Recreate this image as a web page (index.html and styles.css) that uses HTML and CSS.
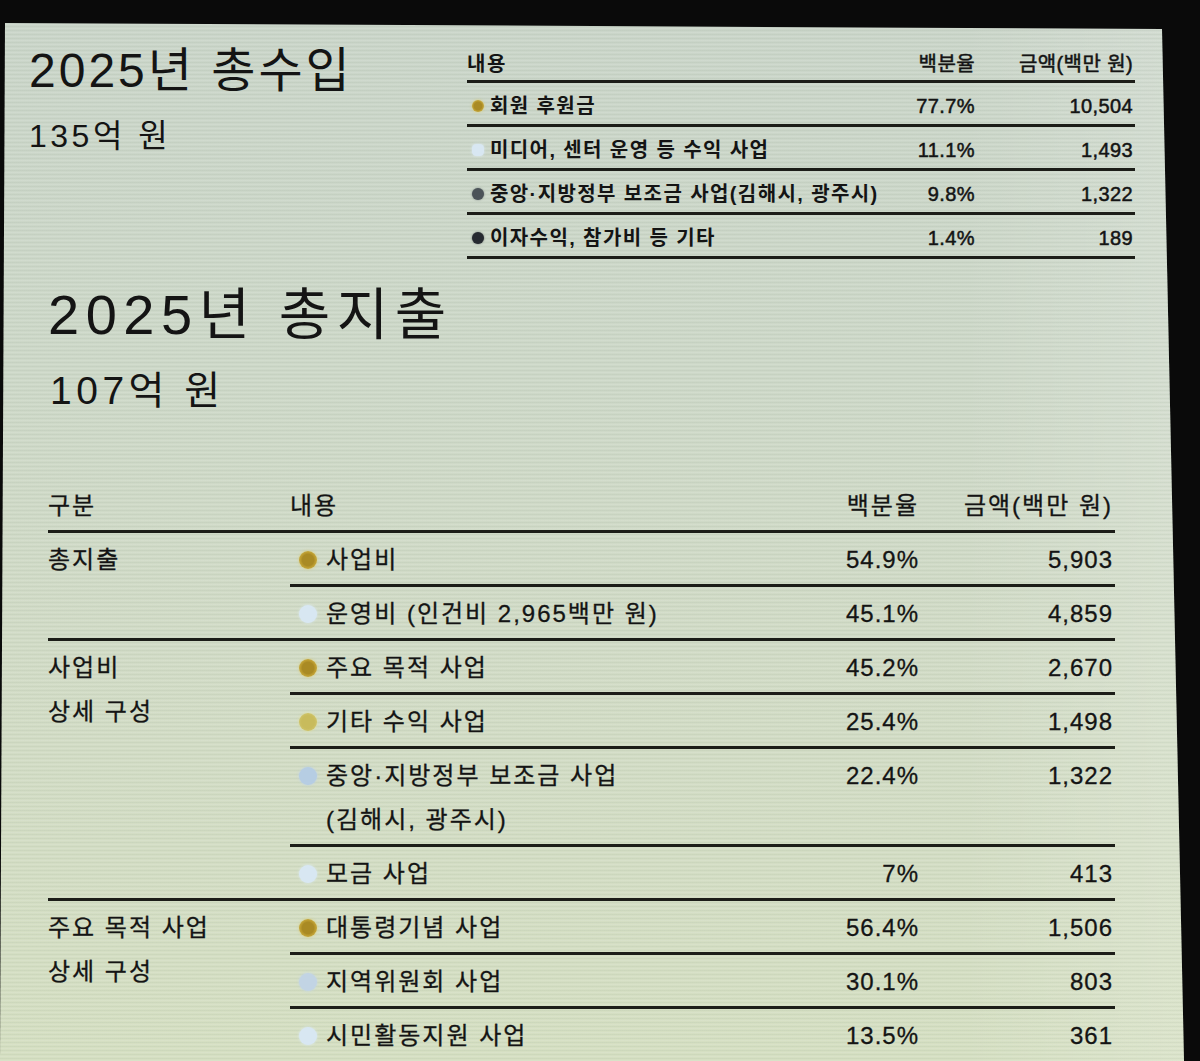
FILE: index.html
```html
<!DOCTYPE html>
<html lang="ko">
<head>
<meta charset="utf-8">
<title>2025년 총수입 · 총지출</title>
<link rel="stylesheet" href="styles.css">
</head>
<body>
<div class="screen">
  <section class="income">
    <div class="income-head">
      <h1 class="title-sm">2025년 총수입</h1>
      <p class="sum-sm">135억 원</p>
    </div>
    <table class="inc-table">
      <colgroup><col class="ic1"><col class="ic2"><col class="ic3"></colgroup>
      <thead>
        <tr><th class="l">내용</th><th class="r">백분율</th><th class="r">금액(백만 원)</th></tr>
      </thead>
      <tbody>
        <tr><td><div class="item"><span class="dot gold"></span><span class="txt">회원 후원금</span></div></td><td class="r">77.7%</td><td class="r">10,504</td></tr>
        <tr><td><div class="item"><span class="dot pale sq"></span><span class="txt">미디어, 센터 운영 등 수익 사업</span></div></td><td class="r">11.1%</td><td class="r">1,493</td></tr>
        <tr><td><div class="item"><span class="dot slate"></span><span class="txt">중앙·지방정부 보조금 사업(김해시, 광주시)</span></div></td><td class="r">9.8%</td><td class="r">1,322</td></tr>
        <tr><td><div class="item"><span class="dot ink"></span><span class="txt">이자수익, 참가비 등 기타</span></div></td><td class="r">1.4%</td><td class="r">189</td></tr>
      </tbody>
    </table>
  </section>

  <section class="expense">
    <h1 class="title-lg">2025년 총지출</h1>
    <p class="sum-lg">107억 원</p>
    <table class="exp-table">
      <colgroup><col class="ec1"><col class="ec2"><col class="ec3"><col class="ec4"></colgroup>
      <thead>
        <tr><th class="l">구분</th><th class="l">내용</th><th class="r">백분율</th><th class="r">금액(백만 원)</th></tr>
      </thead>
      <tbody>
        <tr class="grp">
          <td class="label" rowspan="2">총지출</td>
          <td><div class="item"><span class="dot gold"></span><span class="txt">사업비</span></div></td><td class="r">54.9%</td><td class="r">5,903</td>
        </tr>
        <tr>
          <td><div class="item"><span class="dot pale"></span><span class="txt">운영비 (인건비 2,965백만 원)</span></div></td><td class="r">45.1%</td><td class="r">4,859</td>
        </tr>
        <tr class="grp">
          <td class="label" rowspan="4">사업비<br>상세 구성</td>
          <td><div class="item"><span class="dot gold"></span><span class="txt">주요 목적 사업</span></div></td><td class="r">45.2%</td><td class="r">2,670</td>
        </tr>
        <tr>
          <td><div class="item"><span class="dot lgold"></span><span class="txt">기타 수익 사업</span></div></td><td class="r">25.4%</td><td class="r">1,498</td>
        </tr>
        <tr>
          <td><div class="item"><span class="dot blue"></span><span class="txt">중앙·지방정부 보조금 사업<br>(김해시, 광주시)</span></div></td><td class="r">22.4%</td><td class="r">1,322</td>
        </tr>
        <tr>
          <td><div class="item"><span class="dot pale"></span><span class="txt">모금 사업</span></div></td><td class="r">7%</td><td class="r">413</td>
        </tr>
        <tr class="grp">
          <td class="label" rowspan="3">주요 목적 사업<br>상세 구성</td>
          <td><div class="item"><span class="dot gold"></span><span class="txt">대통령기념 사업</span></div></td><td class="r">56.4%</td><td class="r">1,506</td>
        </tr>
        <tr>
          <td><div class="item"><span class="dot blue2"></span><span class="txt">지역위원회 사업</span></div></td><td class="r">30.1%</td><td class="r">803</td>
        </tr>
        <tr>
          <td><div class="item"><span class="dot pale"></span><span class="txt">시민활동지원 사업</span></div></td><td class="r">13.5%</td><td class="r">361</td>
        </tr>
      </tbody>
    </table>
  </section>
</div>
</body>
</html>
```

FILE: styles.css
```css
html, body {
  margin: 0;
  padding: 0;
  background: #0a0a0a;
}

body {
  width: 1200px;
  height: 1061px;
  overflow: hidden;
  font-family: "Liberation Sans", "Noto Sans CJK KR", sans-serif;
  color: #141414;
}

.screen {
  width: 1200px;
  height: 1061px;
  overflow: hidden;
  clip-path: polygon(5px 23px, 1162px 29px, 1184px 100%, 0 100%);
  background:
    repeating-linear-gradient(180deg, rgba(255,255,255,0.10) 0 1px, rgba(0,0,0,0) 1px 2px, rgba(90,110,90,0.06) 2px 3px, rgba(0,0,0,0) 3px 4px),
    linear-gradient(90deg, rgba(255,255,255,0) 80%, rgba(255,255,255,0.14) 97%),
    linear-gradient(180deg, #cad5c9 0%, #cdd8c8 35%, #d1dbc6 60%, #d5dfc2 100%);
}

/* ---------- income ---------- */
.income {
  display: flex;
  padding: 43px 0 0 29px;
}

.income-head {
  width: 438px;
  flex: none;
}

.title-sm {
  margin: 0;
  font-size: 48px;
  line-height: 56px;
  font-weight: 400;
  letter-spacing: 3px;
}

.sum-sm {
  margin: 17px 0 0;
  font-size: 32px;
  line-height: 40px;
  letter-spacing: 3.5px;
}

.inc-table {
  margin-top: 5px;
  width: 668px;
  table-layout: fixed;
  border-collapse: separate;
  border-spacing: 0;
  font-size: 20px;
}

.ic1 { width: 403px; }
.ic2 { width: 107px; }
.ic3 { width: 158px; }

.inc-table th {
  font-weight: 700;
  line-height: 32px;
  padding: 0;
  border-bottom: 3px solid #1c1d18;
  white-space: nowrap;
  letter-spacing: 1.5px;
}

.inc-table td {
  font-weight: 700;
  line-height: 36px;
  padding: 5px 0 0;
  border-bottom: 3px solid #1c1d18;
  white-space: nowrap;
  vertical-align: top;
}

.inc-table .txt {
  letter-spacing: 1.4px;
}

.inc-table .r {
  padding-right: 2px;
  font-weight: 400;
  -webkit-text-stroke: 0.5px #141414;
  letter-spacing: 0.4px;
}

.l { text-align: left; }
.r { text-align: right; }

.item {
  display: flex;
  align-items: flex-start;
}

.dot {
  flex: none;
  border-radius: 50%;
}

.inc-table .dot {
  width: 12px;
  height: 12px;
  margin: 12px 6px 0 5px;
}

/* ---------- expense ---------- */
.expense {
  padding: 0 0 0 48px;
  margin-top: 24px;
}

.title-lg {
  margin: 0;
  font-size: 56px;
  line-height: 64px;
  font-weight: 400;
  letter-spacing: 6.5px;
}

.sum-lg {
  margin: 21px 0 0 2px;
  font-size: 39px;
  line-height: 46px;
  letter-spacing: 4.5px;
}

.exp-table {
  margin-top: 70px;
  width: 1067px;
  table-layout: fixed;
  border-collapse: separate;
  border-spacing: 0;
  font-size: 24px;
  letter-spacing: 2px;
  -webkit-text-stroke: 0.3px #141414;
}

.ec1 { width: 242px; }
.ec2 { width: 510px; }
.ec3 { width: 121px; }
.ec4 { width: 194px; }

.exp-table th {
  font-weight: 400;
  line-height: 44px;
  padding: 0 0 2px;
  white-space: nowrap;
}

.exp-table td {
  line-height: 44px;
  padding: 5px 0 2px;
  border-top: 3px solid #1c1d18;
  vertical-align: top;
  white-space: nowrap;
}

.exp-table td.r {
  padding-right: 2px;
  letter-spacing: 1px;
}

.exp-table th.r {
  padding-right: 2px;
}

.exp-table td.label {
  padding-left: 0;
}

.exp-table .dot {
  width: 18px;
  height: 18px;
  margin: 13px 9px 0 9px;
}

/* ---------- dot colours ---------- */
.gold {
  background: radial-gradient(circle, #a98a24 0 45%, #bd9d30 60%, #d6c05a 100%);
  box-shadow: 0 0 3px rgba(225, 205, 100, 0.8);
}

.lgold {
  background: radial-gradient(circle, #c8bb5c 0 50%, #d8cf78 100%);
  box-shadow: 0 0 3px rgba(230, 225, 140, 0.8);
}

.blue {
  background: #b6cde3;
  box-shadow: 0 0 3px rgba(190, 210, 235, 0.9);
}

.blue2 {
  background: #c2d4e4;
  box-shadow: 0 0 3px rgba(195, 215, 235, 0.9);
}

.pale {
  background: #d8e7f2;
  box-shadow: 0 0 3px rgba(220, 235, 245, 0.9);
}

.sq {
  border-radius: 35%;
}

.slate {
  background: #4b5358;
  box-shadow: 0 0 2px rgba(60, 70, 75, 0.6);
}

.ink {
  background: #262a31;
  box-shadow: 0 0 2px rgba(30, 35, 40, 0.6);
}
```
